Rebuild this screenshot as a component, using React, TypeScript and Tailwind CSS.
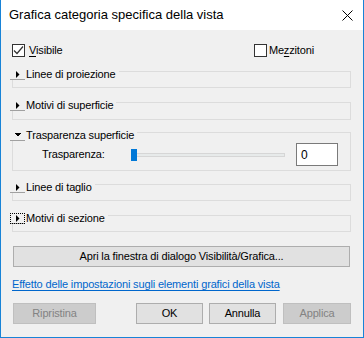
import React from "react";

const FONT = { fontFamily: '"Liberation Sans", Arial, sans-serif' };

function Tri({ down }: { down?: boolean }) {
  return down ? (
    <svg width="7" height="4" viewBox="0 0 7 4" shapeRendering="crispEdges">
      <polygon points="0,0 7,0 3.5,3.5" fill="#000" />
    </svg>
  ) : (
    <svg width="4" height="7" viewBox="0 0 4 7">
      <polygon points="0,0 3.5,3.5 0,7" fill="#000" />
    </svg>
  );
}

function Group({
  label,
  down,
  focused,
  className,
  children,
}: {
  label: string;
  down?: boolean;
  focused?: boolean;
  className: string;
  children?: React.ReactNode;
}) {
  return (
    <div className={`relative border border-[#dcdcdc] ${className}`}>
      <div className="absolute left-[-3px] top-[-3px] flex items-center bg-[#f0f0f0] pr-[3px]">
        <div
          className={`w-[15px] h-[11px] flex items-center justify-center border-b border-[#a0a0a0] ${
            focused ? "outline outline-1 outline-dotted outline-black outline-offset-[-1px]" : ""
          }`}
        >
          <Tri down={down} />
        </div>
        <span className="ml-[1px] text-[11px] leading-[11px] tracking-[-0.15px] text-black">{label}</span>
      </div>
      {children}
    </div>
  );
}

function Btn({
  label,
  disabled,
  className,
}: {
  label: string;
  disabled?: boolean;
  className: string;
}) {
  return (
    <div
      className={`h-[21px] flex items-center justify-center border text-[11px] tracking-[-0.15px] ${
        disabled
          ? "bg-[#cccccc] border-[#bfbfbf] text-[#838383]"
          : "bg-[#e1e1e1] border-[#adadad] text-black"
      } ${className}`}
    >
      {label}
    </div>
  );
}

function Check({ checked }: { checked?: boolean }) {
  return (
    <div className="w-[13px] h-[13px] border border-[#333333] bg-white flex items-center justify-center">
      {checked && (
        <svg width="11" height="11" viewBox="0 0 11 11">
          <polyline points="1,5.5 4,8.5 10,1.5" fill="none" stroke="#333" strokeWidth="1.2" />
        </svg>
      )}
    </div>
  );
}

export default function App() {
  return (
    <div
      className="w-[364px] h-[338px] bg-[#f0f0f0] border-x border-b border-[#1883d7] flex flex-col"
      style={FONT}
    >
      <div className="h-[30px] bg-white flex items-center justify-between pl-[8px] pr-[10px] shrink-0">
        <span className="text-[13px] text-black">Grafica categoria specifica della vista</span>
        <svg width="11" height="11" viewBox="0 0 11 11">
          <path d="M0.5 0.5 L10.5 10.5 M10.5 0.5 L0.5 10.5" stroke="#000" strokeWidth="1" />
        </svg>
      </div>
      <div className="flex flex-col pl-[11px] pr-[12px] tracking-[-0.15px]">
        <div className="mt-[14px] flex items-center h-[13px] text-[11px]">
          <Check checked />
          <span className="ml-[4px]">
            <span className="underline underline-offset-[2px]">V</span>isibile
          </span>
          <div className="ml-auto mr-[37px] flex items-center">
            <Check />
            <span className="ml-[2px]">
              Me<span className="underline underline-offset-[2px]">z</span>zitoni
            </span>
          </div>
        </div>

        <Group label="Linee di proiezione" className="mt-[14px] h-[17px]" />
        <Group label="Motivi di superficie" className="mt-[14px] h-[18px]" />
        <Group label="Trasparenza superficie" down className="mt-[12px] h-[39px]">
          <div className="flex items-center pl-[29px] pt-[10px]">
            <span className="text-[11px] w-[89px]">Trasparenza:</span>
            <div className="relative w-[154px] h-[12px] flex items-center">
              <div className="w-full h-[4px] bg-[#e7eaea] border border-[#d6d6d6]" />
              <div className="absolute left-0 top-0 w-[6px] h-[12px] bg-[#0078d7]" />
            </div>
            <div className="ml-[11px] w-[42px] h-[23px] border border-[#7a7a7a] bg-white flex items-center pl-[4px] text-[12px]">
              0
            </div>
          </div>
        </Group>
        <Group label="Linee di taglio" className="mt-[13px] h-[17px]" />
        <Group label="Motivi di sezione" focused className="mt-[14px] h-[17px]" />

        <Btn
          label="Apri la finestra di dialogo Visibilità/Grafica..."
          className="mt-[14px] ml-[1px] w-[337px]"
        />

        <a className="mt-[11px] text-[11px] text-[#0066cc] underline underline-offset-[2px] leading-[13px]">
          Effetto delle impostazioni sugli elementi grafici della vista
        </a>

        <div className="mt-[12px] flex items-center">
          <Btn label="Ripristina" disabled className="ml-[1px] w-[83px]" />
          <Btn label="OK" className="ml-[40px] w-[67px]" />
          <Btn label="Annulla" className="ml-[6px] w-[67px]" />
          <Btn label="Applica" disabled className="ml-[7px] w-[68px]" />
        </div>
      </div>
    </div>
  );
}
